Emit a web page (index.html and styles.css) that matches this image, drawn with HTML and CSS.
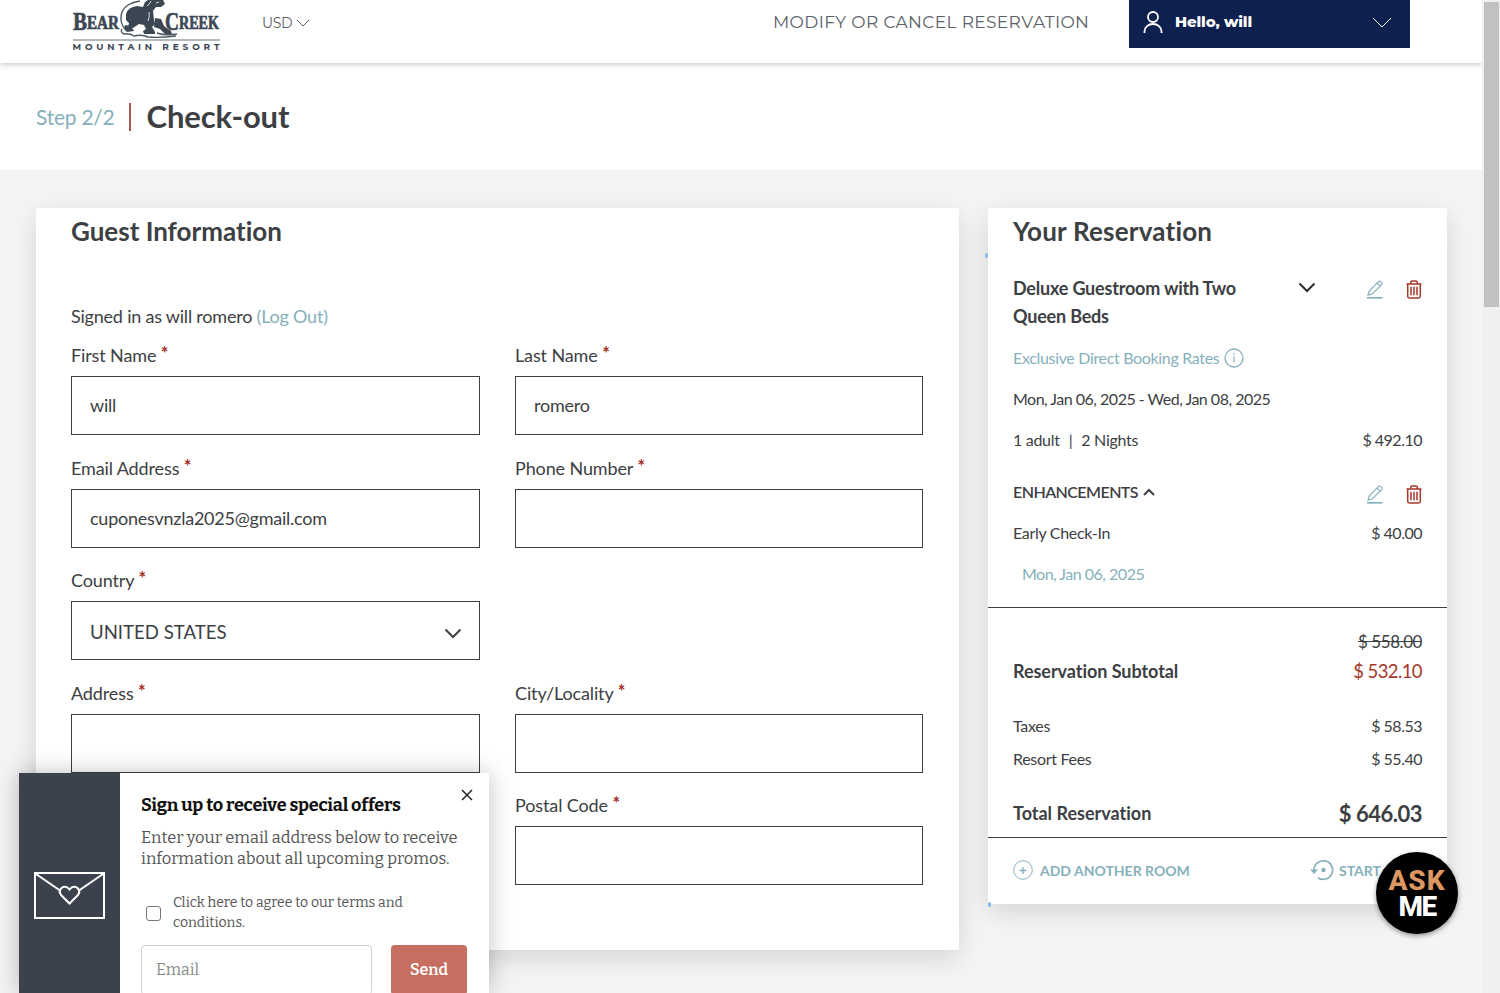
FILE: index.html
```html
<!DOCTYPE html>
<html lang="en">
<head>
    <meta charset="UTF-8">
    <meta name="viewport" content="width=device-width, initial-scale=1.0">
    <title>Check-out | Bear Creek Mountain Resort</title>
    <link rel="stylesheet" href="styles.css">
</head>
<body>
    <!-- shared icons -->
    <svg class="sprite" aria-hidden="true">
        <symbol id="pencil" viewBox="0 0 16 19">
            <path d="M1 15.2 2.2 11 11.6 1.4Q12.6.7 13.6 1.6L14.7 2.7Q15.5 3.7 14.7 4.6L5.2 14Z M10 3.2l3 3" fill="none" stroke="currentColor" stroke-width="1.2"/>
            <path d="M0 17.8h15.5" stroke="currentColor" stroke-width="1.7"/>
        </symbol>
        <symbol id="trash" viewBox="0 0 16 19">
            <path d="M.5 4h15 M4.7 4V2.5Q4.7 1 6.2 1h3.6q1.5 0 1.5 1.5V4 M1.7 4v12.3q0 1.7 1.7 1.7h9.2q1.7 0 1.7-1.7V4 M5 6.7v8.6 M8 6.7v8.6 M11 6.7v8.6" fill="none" stroke="currentColor" stroke-width="1.5"/>
        </symbol>
    </svg>

    <div class="page">
        <header class="header">
            <svg class="logo" width="150" height="52" viewBox="0 0 150 52">
                <path class="bear" d="M54 14Q56 7 65 6l6 1 2-5 3-2h15l2 4-4 3h-5l-3 4 1 9 1 4-3 3 3 5v2H72l-1-3 3-2-2-4-5-1-6 4-5-1 1-4-3-3z"/>
                <path class="bear" d="M83 18l6 1 3 7 7 5 1 3h-7l-5-5-6-2zM53 25l6 1 3 5-7 1-3-3z"/>
                <path class="bear-line" d="M68 1q-7 1-12 4-8 5-7 15 1 6 4 9 M50 29q-2 3 2 5 5-1 10 2 8-2 14 1 12 1 28-1 M85 33q8 3 20 1"/>
                <path class="bear-light" d="M79 1q-1 3-4 5 M87 2l-3 1 M77 12q1 5-1 9"/>
                <text class="logo-name logo-cap" x="1" y="30" textLength="14" lengthAdjust="spacingAndGlyphs">B</text>
                <text class="logo-name" x="15" y="28.500" textLength="32" lengthAdjust="spacingAndGlyphs">EAR</text>
                <text class="logo-name logo-cap" x="93" y="30" textLength="14" lengthAdjust="spacingAndGlyphs">C</text>
                <text class="logo-name" x="107" y="28.500" textLength="40" lengthAdjust="spacingAndGlyphs">REEK</text>
                <path class="logo-rule" d="M1 40h147"/>
                <text class="logo-sub" x="0.500" y="49.500" textLength="147">MOUNTAIN RESORT</text>
            </svg>
            <div class="currency">
                <span>USD</span>
                <svg width="14" height="8" viewBox="0 0 14 8"><path d="M1 1l6 6 6-6" fill="none" stroke="currentColor"/></svg>
            </div>
            <a class="modify">MODIFY OR CANCEL RESERVATION</a>
            <div class="account">
                <svg width="20" height="23" viewBox="0 0 20 23"><g fill="none" stroke="#fff" stroke-width="1.8"><circle cx="10" cy="6" r="5"/><path d="M1.5 22v-1.5a8.5 7.5 0 0 1 17 0V22"/></g></svg>
                <span class="account-name">Hello, will</span>
                <svg class="account-arrow" width="20" height="11" viewBox="0 0 20 11"><path d="M1 1l9 9 9-9" fill="none" stroke="#fff"/></svg>
            </div>
        </header>

        <div class="title-bar">
            <span class="step">Step 2/2</span>
            <h1>Check-out</h1>
        </div>

        <main class="content">
            <section class="card guest">
                <h2>Guest Information</h2>
                <p class="signed">Signed in as will romero <a class="link">(Log Out)</a></p>
                <form class="fields">
                    <label class="field"><span class="label">First Name <i>*</i></span><input type="text" value="will"></label>
                    <label class="field"><span class="label">Last Name <i>*</i></span><input type="text" value="romero"></label>
                    <label class="field"><span class="label">Email Address <i>*</i></span><input type="text" value="cuponesvnzla2025@gmail.com"></label>
                    <label class="field"><span class="label">Phone Number <i>*</i></span><input type="text"></label>
                    <div class="field wide">
                        <span class="label">Country <i>*</i></span>
                        <div class="select">
                            <span>UNITED STATES</span>
                            <svg width="18" height="12" viewBox="0 0 18 12"><path d="M1.5 1.5 9 9l7.500-7.500" fill="none" stroke="#3d4043" stroke-width="2"/></svg>
                        </div>
                    </div>
                    <label class="field"><span class="label">Address <i>*</i></span><input type="text"></label>
                    <label class="field"><span class="label">City/Locality <i>*</i></span><input type="text"></label>
                    <label class="field last"><span class="label">Postal Code <i>*</i></span><input type="text"></label>
                </form>
            </section>

            <aside class="card reservation">
                <h2>Your Reservation</h2>
                <div class="room">
                    <h3>Deluxe Guestroom with Two Queen Beds</h3>
                    <svg class="room-arrow" width="18" height="12" viewBox="0 0 18 12"><path d="M1.500 1.500 9 9l7.500-7.500" fill="none" stroke="#2b2d2f" stroke-width="2"/></svg>
                    <div class="actions">
                        <svg class="edit"><use href="#pencil"/></svg>
                        <svg class="delete"><use href="#trash"/></svg>
                    </div>
                </div>
                <div class="line rate">
                    <span>Exclusive Direct Booking Rates</span>
                    <svg width="20" height="20" viewBox="0 0 20 20"><g fill="none" stroke="currentColor"><circle cx="10" cy="10" r="9" stroke-width="1.300"/><path d="M10 8.500v6M10 5.200v1.500" stroke-width="1.200"/></g></svg>
                </div>
                <div class="line dates">Mon, Jan 06, 2025 - Wed, Jan 08, 2025</div>
                <div class="line"><span>1 adult<span class="bar">|</span>2 Nights</span><span class="amount">$ 492.10</span></div>
                <div class="line enhancements">
                    <span class="enh-title">ENHANCEMENTS <svg width="12" height="8" viewBox="0 0 12 8"><path d="M1 7l5-5 5 5" fill="none" stroke="currentColor" stroke-width="2"/></svg></span>
                    <div class="actions">
                        <svg class="edit"><use href="#pencil"/></svg>
                        <svg class="delete"><use href="#trash"/></svg>
                    </div>
                </div>
                <div class="line"><span>Early Check-In</span><span class="amount">$ 40.00</span></div>
                <div class="line enh-date">Mon, Jan 06, 2025</div>

                <div class="totals">
                    <div class="old-price">$ 558.00</div>
                    <div class="line subtotal"><b>Reservation Subtotal</b><span class="price">$ 532.10</span></div>
                    <div class="line fee"><span>Taxes</span><span class="amount">$ 58.53</span></div>
                    <div class="line fee"><span>Resort Fees</span><span class="amount">$ 55.40</span></div>
                    <div class="line total"><b>Total Reservation</b><strong>$ 646.03</strong></div>
                </div>

                <div class="card-actions">
                    <a class="card-action">
                        <svg width="20" height="20" viewBox="0 0 20 20"><g fill="none" stroke="currentColor"><circle cx="10" cy="10" r="9.300"/><path d="M6.500 10.500h7M10 7v7" stroke-width="1.300"/></g></svg>
                        <span>ADD ANOTHER ROOM</span>
                    </a>
                    <a class="card-action start">
                        <svg width="24" height="22" viewBox="0 0 24 22"><path d="M4 11a9.300 9.300 0 1 1 4 7.700" fill="none" stroke="currentColor" stroke-width="1.700"/><path d="M0 10.500h8l-4 4.500z" fill="currentColor"/><circle cx="13.500" cy="11" r="2.200" fill="currentColor"/></svg>
                        <span>START OVER</span>
                    </a>
                </div>
                <span class="handle handle-top"></span>
                <span class="handle handle-bottom"></span>
            </aside>
        </main>
    </div>

    <div class="scrollbar"><div class="thumb"></div></div>

    <div class="ask-me"><span class="ask">ASK</span><span class="me">ME</span></div>

    <div class="popup">
        <div class="popup-side">
            <svg width="71" height="48" viewBox="0 0 71 48"><g fill="none" stroke="#fff" stroke-width="2"><path d="M1 1h69v45H1z"/><path d="M2 2l24 16.500M69 2L45 18.500"/><path d="M35.500 31.500l-8-8q-3.500-4 0-7.500 4.500-3 8 1.500 3.500-4.500 8-1.500 3.500 3.500 0 7.500z"/></g></svg>
        </div>
        <div class="popup-body">
            <svg class="close" width="12" height="12" viewBox="0 0 12 12"><path d="M1 1l10 10M11 1L1 11" stroke="#222" stroke-width="1.500"/></svg>
            <h4>Sign up to receive special offers</h4>
            <p class="popup-text"><span>Enter your email address below to receive</span> <span>information about all upcoming promos.</span></p>
            <label class="terms"><input type="checkbox"><span>Click here to agree to our terms and conditions.</span></label>
            <div class="signup">
                <input type="text" placeholder="Email">
                <button type="button">Send</button>
            </div>
        </div>
    </div>
</body>
</html>
```
FILE: styles.css
```css
* {
    box-sizing: border-box;
}

body {
    margin: 0;
    height: 993px;
    display: flex;
    overflow: hidden;
    background: #f4f4f4;
    color: #3d4043;
    font-family: Lato, sans-serif;
    font-size: 16px;
    font-variant-ligatures: none;
}

h1, h2, h3, h4, p {
    margin: 0;
}

svg {
    display: block;
    flex: none;
}

.sprite {
    position: absolute;
    width: 0;
    height: 0;
}

.page {
    width: 1482px;
    height: 993px;
    overflow: hidden;
}

/* header */
.header {
    position: relative;
    display: flex;
    height: 63px;
    padding-left: 72px;
    background: #fff;
    box-shadow: 0 1px 6px rgba(0, 0, 0, 0.25);
    font-family: Montserrat, Inter, sans-serif;
    color: #5c6068;
}

.bear {
    fill: #3c4754;
}

.bear-line {
    fill: none;
    stroke: #4d5763;
    stroke-width: 1.4;
}

.bear-light {
    fill: none;
    stroke: #fff;
    stroke-width: 0.8;
}

.logo-name {
    font: bold 18px "Liberation Serif", serif;
    fill: #3c4754;
    stroke: #3c4754;
    stroke-width: 0.7;
}

.logo-cap {
    font-size: 26px;
}

.logo-rule {
    stroke: #9aa0a6;
    stroke-width: 1.5;
}

.logo-sub {
    font: 700 9px Montserrat, Inter, sans-serif;
    fill: #3c4754;
}

.currency {
    display: flex;
    align-items: center;
    gap: 4px;
    height: 45px;
    margin-left: 40px;
    font-size: 14px;
    letter-spacing: -0.3px;
}

.modify {
    width: 316px;
    margin-left: auto;
    line-height: 45px;
    font-size: 17px;
    letter-spacing: 0.37px;
    white-space: nowrap;
}

.account {
    display: flex;
    align-items: center;
    width: 281px;
    height: 48px;
    margin: 0 72px 0 40px;
    padding: 0 18px 3px 14px;
    background: #0e204d;
    color: #fff;
}

.account-name {
    margin: -2px 0 0 12px;
    font-size: 15px;
    font-weight: 800;
    letter-spacing: -0.1px;
}

.account-arrow {
    margin-left: auto;
}

/* title */
.title-bar {
    display: flex;
    align-items: center;
    height: 107px;
    padding-left: 36px;
    background: #fff;
}

.step {
    padding-right: 15px;
    border-right: 2px solid #a9594c;
    line-height: 28px;
    font-size: 21px;
    letter-spacing: -0.25px;
    color: #86b0bb;
}

h1 {
    margin: -2px 0 0 15px;
    font-size: 31px;
    font-weight: 700;
    letter-spacing: -0.1px;
}

.content {
    display: flex;
    align-items: flex-start;
    gap: 29px;
    padding: 38px 35px 0 36px;
}

.card {
    background: #fff;
    box-shadow: 0 8px 24px rgba(0, 0, 0, 0.13);
}

h2 {
    font-size: 26px;
    font-weight: 700;
    line-height: 32px;
}

.guest {
    width: 923px;
    height: 742px;
    padding: 7px 35px 0;
}

.signed {
    margin-top: 54px;
    line-height: 30px;
    font-size: 18px;
    letter-spacing: -0.21px;
}

.link {
    color: #86b0bb;
}

.fields {
    display: grid;
    grid-template-columns: 409px 408px;
    column-gap: 35px;
    row-gap: 20.5px;
    margin-top: 12px;
}

.wide {
    grid-column: 1 / span 2;
}

.wide .select {
    width: 409px;
}

.last {
    grid-column: 2;
}

.field {
    display: block;
    height: 92px;
}

.label {
    display: block;
    height: 33px;
    line-height: 25px;
    font-size: 18px;
    letter-spacing: -0.12px;
}

.label i {
    position: relative;
    top: -2px;
    font-style: normal;
    font-weight: 700;
    color: #9e2f24;
}

.field input,
.select {
    display: flex;
    align-items: center;
    justify-content: space-between;
    width: 100%;
    height: 59px;
    padding: 0 18px 1px;
    border: 1px solid #3d4043;
    background: #fff;
    color: #3d4043;
    font: 18px Lato, sans-serif;
    letter-spacing: -0.24px;
}

.select {
    padding: 2px 18px 0;
    font-size: 18.6px;
    letter-spacing: 0;
}

.select svg {
    margin: 4px -1px 0 0;
}

/* reservation */
.reservation {
    position: relative;
    width: 459px;
    height: 696px;
    padding-top: 7px;
    font-size: 16px;
}

.reservation h2 {
    letter-spacing: 0.2px;
}

.reservation h2,
.room,
.line {
    padding-left: 25px;
    padding-right: 25px;
}

.room {
    display: flex;
    margin-top: 27px;
}

h3 {
    width: 250px;
    line-height: 28px;
    font-size: 18px;
    font-weight: 700;
    letter-spacing: -0.2px;
}

.room-arrow {
    margin: 8px 0 0 35px;
}

.actions {
    display: flex;
    gap: 23px;
    margin-left: auto;
}

.room .actions {
    margin-top: 6px;
}

.actions svg {
    width: 16px;
    height: 19px;
}

.edit {
    color: #86b0bb;
}

.delete {
    color: #a5382b;
}

.line {
    display: flex;
    align-items: center;
    justify-content: space-between;
    height: 41px;
    letter-spacing: -0.3px;
}

.rate {
    justify-content: flex-start;
    gap: 5px;
    margin-top: 7px;
    letter-spacing: -0.33px;
    color: #86b0bb;
}

.dates,
.amount {
    letter-spacing: -0.5px;
}

.bar {
    margin: 0 9px;
}

.enhancements {
    margin-top: 11px;
}

.enh-title {
    display: flex;
    align-items: center;
    gap: 5px;
    font-weight: 600;
    letter-spacing: -0.55px;
}

.enhancements .actions {
    margin-top: 5px;
}

.enh-date {
    padding-left: 34px;
    letter-spacing: -0.5px;
    color: #86b0bb;
}

.totals {
    height: 231px;
    margin-top: 13px;
    padding-top: 23px;
    border-top: 1px solid #3d4043;
    border-bottom: 1px solid #3d4043;
}

.old-price {
    padding-right: 25px;
    line-height: 22px;
    font-size: 17px;
    letter-spacing: -0.45px;
    text-align: right;
    text-decoration: line-through;
}

.subtotal {
    height: 35px;
    margin-bottom: 21px;
    font-size: 18px;
    letter-spacing: -0.05px;
}

.price {
    font-size: 18.5px;
    letter-spacing: -0.6px;
    color: #a5382b;
}

.fee {
    height: 33px;
}

.total {
    height: 36px;
    margin-top: 20px;
    font-size: 18px;
    letter-spacing: 0;
}

.total strong {
    font-size: 22px;
    letter-spacing: -0.5px;
}

.card-actions {
    display: flex;
    justify-content: space-between;
    align-items: center;
    height: 65px;
    padding: 0 0 1px 25px;
    color: #86b0bb;
    font-size: 14px;
    font-weight: 700;
}

.card-action {
    display: flex;
    align-items: center;
    gap: 7px;
}

.start {
    width: 137px;
    gap: 5px;
    white-space: nowrap;
}

.handle {
    position: absolute;
    width: 3px;
    height: 5px;
    border-radius: 2px;
    background: #8bbcf0;
}

.handle-top {
    left: -3px;
    top: 45px;
}

.handle-bottom {
    left: 0;
    bottom: -3px;
}

.scrollbar {
    width: 18px;
    height: 993px;
    padding: 2px 1px 0 2px;
    background: #f0f0f0;
}

.thumb {
    height: 305px;
    background: #c1c1c1;
}

/* chat button */
.ask-me {
    position: absolute;
    left: 1376px;
    top: 852px;
    display: flex;
    flex-direction: column;
    align-items: center;
    width: 82px;
    height: 82px;
    padding-top: 16px;
    border-radius: 50%;
    background: #000;
    box-shadow: 0 2px 5px rgba(0, 0, 0, 0.4);
    color: #fff;
    font: 800 28px/26px Roboto, sans-serif;
}

.ask {
    color: #dc9860;
    letter-spacing: 1px;
}

.me {
    letter-spacing: -1.5px;
}

/* newsletter popup */
.popup {
    position: absolute;
    left: 19px;
    top: 773px;
    display: flex;
    width: 470px;
    height: 220px;
    background: #fff;
    box-shadow: 0 0 22px rgba(0, 0, 0, 0.25);
    font-family: Bitter, "DejaVu Serif Condensed", "DejaVu Serif", serif;
    color: #555;
}

.popup-side {
    display: flex;
    justify-content: center;
    width: 101px;
    padding-top: 99px;
    background: #3c424d;
}

.popup-body {
    flex: 1;
    padding: 20px 0 0 21px;
}

.close {
    position: absolute;
    right: 16px;
    top: 16px;
}

h4 {
    line-height: 24px;
    font-size: 18px;
    letter-spacing: -0.2px;
    color: #111;
    white-space: nowrap;
}

.popup-text {
    margin-top: 10px;
    line-height: 21px;
    font-size: 16.45px;
    white-space: nowrap;
}

.popup-text span {
    display: block;
}

.terms {
    display: flex;
    align-items: center;
    margin-top: 24px;
    line-height: 20px;
    font-size: 14px;
}

.terms input {
    appearance: none;
    flex: none;
    width: 15px;
    height: 15px;
    margin: 0 12px 0 5px;
    border: 1px solid #767676;
    border-radius: 3px;
}

.terms span {
    width: 250px;
}

.signup {
    display: flex;
    gap: 19px;
    margin-top: 12px;
}

.signup input {
    width: 231px;
    height: 50px;
    padding: 0 14px 2px;
    border: 1px solid #ccd0d4;
    border-radius: 4px;
    font-family: inherit;
    font-size: 16px;
}

.signup input::placeholder {
    color: #8b8b8b;
}

.signup button {
    width: 76px;
    height: 50px;
    padding: 0 0 2px;
    border: 0;
    border-radius: 4px;
    background: #c66e60;
    color: #fff;
    font-family: inherit;
    font-size: 16px;
    font-weight: 600;
}
```
